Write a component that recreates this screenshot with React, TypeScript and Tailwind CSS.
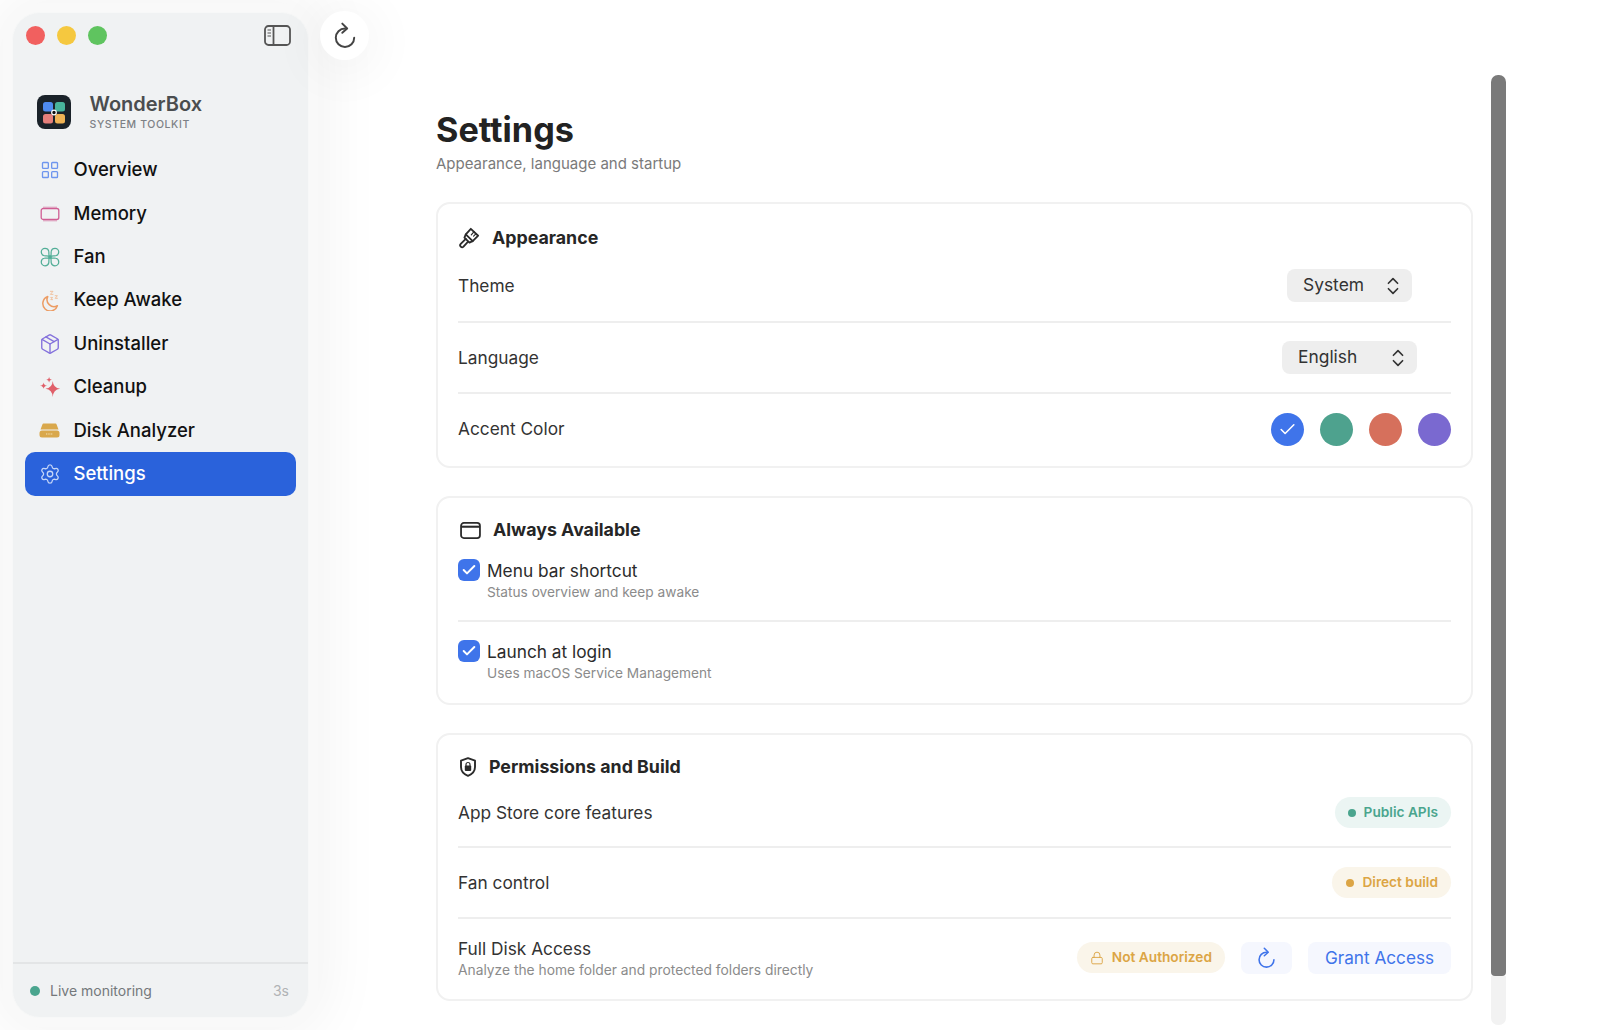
import { Check, ChevronsUpDown, LayoutGrid, Lock, Package, Settings } from "lucide-react";
import type { ReactNode } from "react";

function RefreshIcon({ className }: { className?: string }) {
  return (
    <svg viewBox="0 0 24 24" fill="none" stroke="currentColor" strokeWidth="1.8" strokeLinecap="round" strokeLinejoin="round" className={className}>
      <path d="M12 6a8.5 8.5 0 1 0 8.5 8.5" />
      <path d="M9.5 1.5 14 6l-4.500 4" />
    </svg>
  );
}

function SidebarToggleIcon() {
  return (
    <svg viewBox="0 0 27 21" fill="none" stroke="#555" strokeWidth="1.8" className="w-[27px] h-[21px]">
      <rect x="1" y="1" width="25" height="19" rx="3.500" />
      <path d="M9.500 1v19" />
      <path d="M3.500 5h3.500M3.500 8h3.500M3.500 11h3.500" strokeWidth="1.200" />
    </svg>
  );
}

function Logo() {
  return (
    <svg viewBox="0 0 34 34" className="w-[34px] h-[34px] shrink-0">
      <rect width="34" height="34" rx="8" fill="#1a2229" />
      <rect x="6" y="7" width="10" height="9.500" rx="2.500" fill="#4f8bf0" />
      <rect x="18" y="7" width="10" height="9.500" rx="2.500" fill="#48b39b" />
      <rect x="6" y="19" width="10" height="9.500" rx="2.500" fill="#e57f7b" />
      <rect x="18" y="19" width="10" height="9.500" rx="2.500" fill="#efb354" />
      <circle cx="17" cy="17.500" r="2.300" fill="#111" stroke="#fff" strokeWidth="1.200" />
    </svg>
  );
}

function MemoryIcon() {
  return (
    <svg viewBox="0 0 20 16" fill="none" stroke="#d05f94" className="w-[20px] h-[16px]">
      <rect x="1.200" y="2.500" width="17.600" height="11" rx="2" strokeWidth="1.300" />
      <path d="M4 .5v2M6 .5v2M8 .5v2M10 .5v2M12 .5v2M14 .5v2M16 .5v2M4 13.500v2M6 13.500v2M8 13.500v2M10 13.500v2M12 13.500v2M14 13.500v2M16 13.500v2" strokeWidth="0.700" />
    </svg>
  );
}

function FanIcon() {
  const petal = "M11.500 11.500C10 9.500 11 7 10.500 5C10 2.500 8 1.500 6 1.500C3.500 1.500 1.500 3.500 1.500 6C1.500 8 2.500 10 5 10.500C7 11 9.500 10 11.500 11.500Z";
  return (
    <svg viewBox="0 0 24 24" fill="none" stroke="#52ae97" strokeWidth="1.500" strokeLinejoin="round" className="w-[20px] h-[20px]">
      <path d={petal} />
      <path d={petal} transform="rotate(90 12 12)" />
      <path d={petal} transform="rotate(180 12 12)" />
      <path d={petal} transform="rotate(270 12 12)" />
      <circle cx="12" cy="12" r="1.500" />
    </svg>
  );
}

function MoonIcon() {
  return (
    <svg viewBox="0 0 24 24" fill="none" stroke="#ec9c63" strokeWidth="1.700" strokeLinejoin="round" strokeLinecap="round" className="w-[21px] h-[21px]">
      <path d="M10 7.500a8.500 8.500 0 1 0 11 10.500a8 8 0 0 1-11-10.500Z" />
      <path d="M13 1.500h3l-3 3.500h3M18.500 6.500h2.500l-2.500 3h2.500M13.500 8.500h2l-2 2.500h2" stroke="#f0bb94" strokeWidth="1" />
    </svg>
  );
}

function SparkleIcon() {
  return (
    <svg viewBox="0 0 24 24" fill="#e0606a" className="w-[22px] h-[22px]">
      <path d="M15 5.500Q15.500 13 23 14Q15.500 15 15 23Q14.500 15 7 14Q14.500 13 15 5.500Z" />
      <path d="M5 7Q5.300 10.200 9 10.500Q5.300 10.800 5 14Q4.700 10.800 1 10.500Q4.700 10.200 5 7Z" />
      <path d="M11 1Q11.200 3.800 14 4Q11.200 4.200 11 7Q10.800 4.200 8 4Q10.800 3.800 11 1Z" />
    </svg>
  );
}

function DiskIcon() {
  return (
    <svg viewBox="0 0 21 15" className="w-[21px] h-[15px]">
      <path d="M4.500 0.500h12a1 1 0 0 1 1 .7l2 5.300H1.500l2-5.300a1 1 0 0 1 1-.7Z" fill="#d9a84c" />
      <rect x="0.500" y="7.500" width="20" height="7" rx="2.500" fill="#d9a84c" />
      <path d="M7 11h7" stroke="#f5e3b8" strokeWidth="1.200" strokeDasharray="1 .7" />
    </svg>
  );
}

function BrushIcon() {
  return (
    <svg viewBox="0 0 24 24" fill="none" stroke="#2b2b2b" strokeWidth="2" strokeLinejoin="round" strokeLinecap="round" className="w-[22px] h-[22px]">
      <path d="M14 2 22 9.500 16 15.500 8.500 8Z" />
      <path d="M17.500 5 14.500 8.500M19.500 7.500 17 10" strokeWidth="1.300" />
      <path d="M8.500 8 7 11.500 12.500 17 16 15.500" />
      <path d="M8.500 13 3 18.500a2 2 0 0 0 3 3l5-5.500" />
    </svg>
  );
}

function WindowIcon() {
  return (
    <svg viewBox="0 0 22 18" fill="none" stroke="#2b2b2b" className="w-[21px] h-[17px]">
      <rect x="1" y="1" width="20" height="16" rx="3" strokeWidth="1.900" />
      <path d="M1 5h20" strokeWidth="2.200" />
    </svg>
  );
}

function ShieldIcon() {
  return (
    <svg viewBox="0 0 18 20" fill="none" className="w-[18px] h-[20px]">
      <path d="M9 1.200 16 3.700V10c0 4.300-3 7.200-7 8.800C5 17.200 2 14.300 2 10V3.700Z" stroke="#2b2b2b" strokeWidth="1.900" strokeLinejoin="round" />
      <rect x="5.800" y="8.500" width="6.400" height="5.500" rx="1" fill="#2b2b2b" />
      <path d="M7 9V7.500a2 2 0 0 1 4 0V9" stroke="#2b2b2b" strokeWidth="1.200" />
    </svg>
  );
}

const navItems: { label: string; icon: ReactNode }[] = [
  { label: "Overview", icon: <LayoutGrid className="w-[20px] h-[20px] text-[#6f96ee]" strokeWidth={1.6} /> },
  { label: "Memory", icon: <MemoryIcon /> },
  { label: "Fan", icon: <FanIcon /> },
  { label: "Keep Awake", icon: <MoonIcon /> },
  { label: "Uninstaller", icon: <Package className="w-[22px] h-[22px] text-[#8471dc]" strokeWidth={1.5} /> },
  { label: "Cleanup", icon: <SparkleIcon /> },
  { label: "Disk Analyzer", icon: <DiskIcon /> },
];

function NavRow({ label, icon, active }: { label: string; icon: ReactNode; active?: boolean }) {
  return (
    <div className={`h-[43.400px] flex items-center rounded-[10px] ${active ? "bg-[#2a62db] text-white" : "text-[#111]"}`}>
      <div className="w-[48.500px] pl-[1px] flex justify-center">{icon}</div>
      <span className="text-[18.500px] font-medium">{label}</span>
    </div>
  );
}

function Sidebar() {
  return (
    <aside className="w-[297px] h-[1006px] m-[12px] shrink-0 rounded-[28px] bg-[#f0f2f3] border border-[#f7f8f8] shadow-[0_0_0_9px_#f9f9f9,0_0_60px_18px_rgba(0,0,0,0.05)] flex flex-col">
      <div className="h-[44px] flex items-center justify-between pl-[13px] pr-[17px]">
        <div className="flex gap-[12px]">
          <div className="w-[19px] h-[19px] rounded-full bg-[#f1605f]" />
          <div className="w-[19px] h-[19px] rounded-full bg-[#f5c83f]" />
          <div className="w-[19px] h-[19px] rounded-full bg-[#5fc45f]" />
        </div>
        <SidebarToggleIcon />
      </div>
      <div className="flex items-center gap-[18.500px] pl-[24px] mt-[34px]">
        <Logo />
        <div>
          <div className="text-[20px] font-semibold leading-[26px] text-[#4a4d4f]">WonderBox</div>
          <div className="mt-[1px] text-[10.500px] font-medium leading-[14px] tracking-[0.6px] text-[#7d8185]">SYSTEM TOOLKIT</div>
        </div>
      </div>
      <nav className="mt-[16.500px] px-[12px] flex-1">
        {navItems.map(item => (
          <NavRow key={item.label} label={item.label} icon={item.icon} />
        ))}
        <NavRow label="Settings" active icon={<Settings className="w-[22px] h-[22px] text-[#c5d6f7]" strokeWidth={1.4} />} />
      </nav>
      <div className="h-[55px] border-t-2 border-[#e3e5e6] flex items-center pl-[17px] pr-[19px]">
        <div className="w-[10px] h-[10px] rounded-full bg-[#4aa58e]" />
        <span className="ml-[10px] text-[14px] text-[#74787b]">Live monitoring</span>
        <span className="ml-auto text-[14px] text-[#b0b3b5]">3s</span>
      </div>
    </aside>
  );
}

function Card({ className, children }: { className: string; children: ReactNode }) {
  return <section className={`rounded-[14px] border-2 border-[#f1f1f1] bg-white px-[20px] ${className}`}>{children}</section>;
}

function CardHeader({ icon, title }: { icon: ReactNode; title: string }) {
  return (
    <div className="h-[24px] flex items-center gap-[12px]">
      {icon}
      <h2 className="text-[17.800px] font-bold text-[#262626]">{title}</h2>
    </div>
  );
}

function Row({ className, children }: { className: string; children: ReactNode }) {
  return <div className={`flex items-center justify-between ${className}`}>{children}</div>;
}

function Divider() {
  return <div className="h-[2px] bg-[#eeeeee]" />;
}

function SelectBox({ value, className }: { value: string; className: string }) {
  return (
    <div className="w-[203px] flex justify-center">
      <div className={`h-[33px] rounded-[8px] bg-[#eeeeee] flex items-center justify-between pl-[16px] pr-[8px] text-[17.400px] text-[#333] ${className}`}>
        {value}
        <ChevronsUpDown className="w-[22px] h-[22px]" strokeWidth={1.8} />
      </div>
    </div>
  );
}

function Checkbox() {
  return (
    <div className="w-[22px] h-[22px] rounded-[6px] bg-[#3f74ea] flex items-center justify-center shrink-0">
      <Check className="w-[16px] h-[16px] text-white" strokeWidth={3} />
    </div>
  );
}

function CheckRow({ title, sub }: { title: string; sub: string }) {
  return (
    <div className="flex gap-[7px]">
      <Checkbox />
      <div>
        <div className="text-[17.300px] leading-[24px] text-[#2b2b2b]">{title}</div>
        <div className="text-[13.700px] leading-[18px] text-[#8b8b8b]">{sub}</div>
      </div>
    </div>
  );
}

function Pill({ children, className }: { children: ReactNode; className: string }) {
  return <div className={`h-[31px] rounded-full flex items-center text-[13.700px] font-semibold ${className}`}>{children}</div>;
}

function SettingsContent() {
  return (
    <main className="w-[1037px] pt-[109px] ml-[115px]">
      <h1 className="text-[34.200px] font-bold leading-[42px] text-[#222]">Settings</h1>
      <p className="mt-[3px] text-[15px] leading-[20px] text-[#7a7a7a]">Appearance, language and startup</p>

      <Card className="mt-[28px] pt-[22px] h-[266px]">
        <CardHeader title="Appearance" icon={<BrushIcon />} />
        <Row className="h-[71px]">
          <span className="text-[17.300px] text-[#333]">Theme</span>
          <SelectBox value="System" className="w-[125px]" />
        </Row>
        <Divider />
        <Row className="h-[69px]">
          <span className="text-[17.300px] text-[#333]">Language</span>
          <SelectBox value="English" className="w-[135px]" />
        </Row>
        <Divider />
        <Row className="h-[70px]">
          <span className="text-[17.300px] text-[#333]">Accent Color</span>
          <div className="flex gap-[16px]">
            <div className="w-[33px] h-[33px] rounded-full bg-[#3f74ea] flex items-center justify-center">
              <Check className="w-[19px] h-[19px] text-white" strokeWidth={2} />
            </div>
            <div className="w-[33px] h-[33px] rounded-full bg-[#4ea28e]" />
            <div className="w-[33px] h-[33px] rounded-full bg-[#d6705c]" />
            <div className="w-[33px] h-[33px] rounded-full bg-[#7a69d0]" />
          </div>
        </Row>
      </Card>

      <Card className="mt-[28px] pt-[20px] h-[209px]">
        <CardHeader title="Always Available" icon={<div className="pl-[2px]"><WindowIcon /></div>} />
        <div className="mt-[17px] pb-[19px]">
          <CheckRow title="Menu bar shortcut" sub="Status overview and keep awake" />
        </div>
        <Divider />
        <div className="mt-[18px]">
          <CheckRow title="Launch at login" sub="Uses macOS Service Management" />
        </div>
      </Card>

      <Card className="mt-[28px] pt-[20px] h-[268px]">
        <CardHeader title="Permissions and Build" icon={<div className="pl-[1px]"><ShieldIcon /></div>} />
        <Row className="h-[67px]">
          <span className="text-[17.300px] text-[#333]">App Store core features</span>
          <Pill className="bg-[#ebf5f3] text-[#4aa58e] pl-[13px] pr-[13px] gap-[8px]">
            <div className="w-[8px] h-[8px] rounded-full bg-[#4aa58e]" />
            Public APIs
          </Pill>
        </Row>
        <Divider />
        <Row className="h-[69px]">
          <span className="text-[17.300px] text-[#333]">Fan control</span>
          <Pill className="bg-[#faf5ea] text-[#dca545] pl-[14px] pr-[13px] gap-[8px]">
            <div className="w-[8px] h-[8px] rounded-full bg-[#dca545]" />
            Direct build
          </Pill>
        </Row>
        <Divider />
        <Row className="h-[66px] pt-[11px]">
          <div>
            <div className="text-[17.300px] leading-[24px] text-[#333]">Full Disk Access</div>
            <div className="text-[13.800px] leading-[18px] text-[#8b8b8b]">Analyze the home folder and protected folders directly</div>
          </div>
          <div className="flex items-center gap-[16px]">
            <Pill className="bg-[#faf5ea] text-[#dca545] pl-[13px] pr-[13px] gap-[8px]">
              <Lock className="w-[14px] h-[14px]" strokeWidth={1.6} />
              Not Authorized
            </Pill>
            <div className="w-[51px] h-[32px] rounded-[8px] bg-[#f5f7fe] flex items-center justify-center text-[#3f74ea]">
              <RefreshIcon className="w-[21px] h-[21px]" />
            </div>
            <div className="w-[143px] h-[32px] rounded-[8px] bg-[#f5f7fe] flex items-center justify-center text-[17.200px] text-[#3f74ea]">
              Grant Access
            </div>
          </div>
        </Row>
      </Card>
    </main>
  );
}

export default function App() {
  return (
    <div className="relative w-[1600px] h-[1030px] overflow-hidden bg-white flex font-['Inter',sans-serif]">
      <Sidebar />
      <SettingsContent />
      <div className="ml-[18px] w-[15px] pt-[75px] pb-[5px] flex flex-col shrink-0">
        <div className="h-[901px] bg-[#7a7a7a] rounded-t-[7px] rounded-b-[4px]" />
        <div className="flex-1 bg-[#f2f2f2] rounded-b-[7px]" />
      </div>
      <div className="absolute left-[320px] top-[11px] w-[49px] h-[49px] rounded-full bg-white shadow-[0_6px_50px_10px_rgba(0,0,0,0.045)] flex items-center justify-center text-[#444] pb-[2px]">
        <RefreshIcon className="w-[26px] h-[26px]" />
      </div>
    </div>
  );
}
